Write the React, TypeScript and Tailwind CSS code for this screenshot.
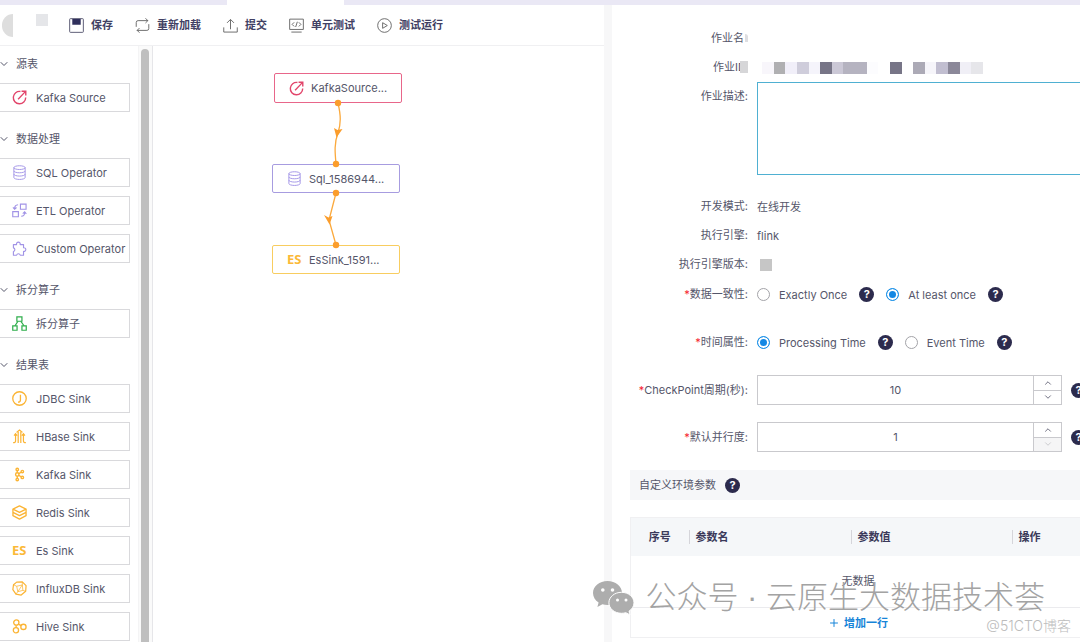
import type { ReactNode } from "react";
import { ChevronDown, ChevronUp, Plus } from "lucide-react";

type IconProps = { className?: string };

function SaveIcon() {
  return (
    <svg viewBox="0 0 16 16" className="h-[15px] w-[15px]" fill="none" stroke="#55556f">
      <rect x="0.7" y="0.7" width="14.6" height="14.6" rx="0.8" />
      <path d="M3.5 1h9v6.2h-9z" fill="#2f2f5c" stroke="none" />
    </svg>
  );
}

function ReloadIcon() {
  return (
    <svg viewBox="0 0 16 16" className="h-[15px] w-[15px]" fill="none" stroke="#666" strokeLinecap="round">
      <path d="M1.300 9V4.800a2 2 0 0 1 2-2H13.500M11.500.6l2.200 2.200L11.500 5" />
      <path d="M14.700 7v4.200a2 2 0 0 1-2 2H2.500M4.500 11l-2.200 2.200 2.200 2.200" />
    </svg>
  );
}

function SubmitIcon() {
  return (
    <svg viewBox="0 0 16 16" className="h-[15px] w-[15px]" fill="none" stroke="#666">
      <path d="M8 12V1.8M4.3 5.2L8 1.5l3.7 3.7M.8 10v5h14.4v-5" />
    </svg>
  );
}

function UnitTestIcon() {
  return (
    <svg viewBox="0 0 16 16" className="h-[15px] w-[15px]" fill="none" stroke="#666">
      <path d="M.7 1.2h14.6v11H.7zM2.5 15h11M5.5 4.6L3.3 6.8l2.2 2.2M10.5 4.6l2.2 2.2L10.5 9M8.9 4l-1.8 5.6" />
    </svg>
  );
}

function RunIcon() {
  return (
    <svg viewBox="0 0 16 16" className="h-[15px] w-[15px]" fill="none" stroke="#666" strokeLinejoin="round">
      <circle cx="8" cy="8" r="7.3" />
      <path d="M6 5l5 3-5 3z" />
    </svg>
  );
}

function SourceIcon({ className }: IconProps) {
  return (
    <svg viewBox="0 0 16 16" className={className} fill="none" stroke="#e2456b" strokeWidth="1.5">
      <path d="M9 1.6A6.6 6.6 0 1 0 14.6 8" />
      <path d="M6.5 9.8L14 2M10.2 1.4h4.5v4.5" />
    </svg>
  );
}

function SqlIcon({ className }: IconProps) {
  return (
    <svg viewBox="0 0 16 16" className={className} fill="none" stroke="#a193e6">
      <ellipse cx="8" cy="2.8" rx="6" ry="2" />
      <path d="M2 2.8v10.6c0 1.1 2.7 2 6 2s6-.9 6-2V2.8M2 6.3c0 1.1 2.7 2 6 2s6-.9 6-2M2 9.8c0 1.1 2.7 2 6 2s6-.9 6-2" />
    </svg>
  );
}

function EtlIcon({ className }: IconProps) {
  return (
    <svg viewBox="0 0 16 16" className={className} fill="none" stroke="#a193e6" strokeWidth="1.2">
      <path d="M9 1.2h6v5.4H9zM.8 9.2h6v5.4h-6z" />
      <path d="M6.5 1.8A4 4 0 0 0 2.8 6M1 4.6L2.8 6.6l2-1.8M9.8 14.2a4 4 0 0 0 3.7-4.2M11.5 11.4l2-1.9 1.8 2" />
    </svg>
  );
}

function CustomIcon({ className }: IconProps) {
  return (
    <svg viewBox="0 0 16 16" className={className} fill="none" stroke="#a193e6" strokeWidth="1.2" strokeLinejoin="round">
      <path d="M1.5 3.8h3.4a2 2 0 1 1 3.8 0h3.6v3.400a2 2 0 1 1 0 3.900v4.100H8.8a2 2 0 0 0-3.900 0H1.500v-4a2 2 0 0 0 0-3.900z" />
    </svg>
  );
}

function SplitIcon({ className }: IconProps) {
  return (
    <svg viewBox="0 0 16 16" className={className} fill="none" stroke="#2fae4c" strokeWidth="1.3">
      <path d="M5.2 1h5.4v4.6H5.2zM.8 10.6h4.6v4.6H.8zM10.6 10.6h4.6v4.6h-4.6z" />
      <path d="M6.3 5.8L3.2 10.4M9.5 5.8l3.3 4.6" />
    </svg>
  );
}

function JdbcIcon({ className }: IconProps) {
  return (
    <svg viewBox="0 0 16 16" className={className} fill="none" stroke="#fbb434" strokeWidth="1.4">
      <circle cx="8" cy="8" r="7.2" />
      <path d="M9 4v5.6c0 1.6-.8 2.3-2.6 2.3" />
    </svg>
  );
}

function HbaseIcon({ className }: IconProps) {
  return (
    <svg viewBox="0 0 16 16" className={className} fill="none" stroke="#fbb434" strokeWidth="1.3">
      <path d="M6.6 15V3M9.4 15V3M3.8 5.5v7.2c0 1.4-.8 1.9-2.6 1.9M12.2 5.5v7.2c0 1.4.8 1.9 2.6 1.9M4.8 3.6L8 1l3.2 2.6M2.2 7l1.6-2 1.6 2M10.6 7l1.6-2 1.6 2" />
    </svg>
  );
}

function KafkaIcon({ className }: IconProps) {
  return (
    <svg viewBox="0 0 16 16" className={className} fill="none" stroke="#fbb434" strokeWidth="1.5">
      <circle cx="5.6" cy="2.6" r="1.3" />
      <circle cx="5.6" cy="8" r="1.8" />
      <circle cx="5.6" cy="13.4" r="1.3" />
      <circle cx="11" cy="4.9" r="1.3" />
      <circle cx="11" cy="11.1" r="1.3" />
      <path d="M5.6 4v2.2M5.6 9.8V12M7.2 7.1l2.6-1.5M7.2 8.9l2.6 1.5" />
    </svg>
  );
}

function RedisIcon({ className }: IconProps) {
  return (
    <svg viewBox="0 0 16 16" className={className} fill="none" stroke="#fbb434" strokeWidth="1.4" strokeLinejoin="round">
      <path d="M8 1l7 3.4-7 3.4-7-3.4z" />
      <path d="M1 4.6v3.2l7 3.5 7-3.5V4.6M1 8v3.4L8 15l7-3.6V8" />
    </svg>
  );
}

function EsIcon() {
  return (
    <span className="w-[15px] font-['Open_Sans',sans-serif] text-[13px] leading-none font-bold text-[#fbb938]">ES</span>
  );
}

function InfluxIcon({ className }: IconProps) {
  return (
    <svg viewBox="0 0 16 16" className={className} fill="none" stroke="#fbb434" strokeLinejoin="round">
      <path d="M5 1.2l6-.2 4 4-.4 6-4.8 4-5.6-1L.9 9.2 1.6 4z" strokeWidth="1.3" />
      <path d="M5 5.6l6-1.4.6 5.8-5.4 1.4zM5 5.6L1.6 4M11 4.2L11 1M11.6 10l3 1M6.2 11.4L4.2 14M6.2 11.4L11 4.2" strokeWidth="0.8" />
    </svg>
  );
}

function HiveIcon({ className }: IconProps) {
  return (
    <svg viewBox="0 0 16 16" className={className} fill="none" stroke="#fbb434" strokeWidth="1.4">
      <circle cx="4.6" cy="3.8" r="2.8" />
      <circle cx="4.2" cy="12" r="2.8" />
      <circle cx="12.2" cy="8.4" r="2.8" />
      <path d="M4.4 6.6v2.6M6.8 5.4l3 1.6" />
    </svg>
  );
}

const toolbar = [
  { label: "保存", Icon: SaveIcon },
  { label: "重新加载", Icon: ReloadIcon },
  { label: "提交", Icon: SubmitIcon },
  { label: "单元测试", Icon: UnitTestIcon },
  { label: "测试运行", Icon: RunIcon },
];

const groups = [
  { title: "源表", items: [{ label: "Kafka Source", Icon: SourceIcon }] },
  {
    title: "数据处理",
    items: [
      { label: "SQL Operator", Icon: SqlIcon },
      { label: "ETL Operator", Icon: EtlIcon },
      { label: "Custom Operator", Icon: CustomIcon },
    ],
  },
  { title: "拆分算子", items: [{ label: "拆分算子", Icon: SplitIcon }] },
  {
    title: "结果表",
    items: [
      { label: "JDBC Sink", Icon: JdbcIcon },
      { label: "HBase Sink", Icon: HbaseIcon },
      { label: "Kafka Sink", Icon: KafkaIcon },
      { label: "Redis Sink", Icon: RedisIcon },
      { label: "Es Sink", Icon: EsIcon },
      { label: "InfluxDB Sink", Icon: InfluxIcon },
      { label: "Hive Sink", Icon: HiveIcon },
    ],
  },
];

// masked job id
const maskCells = [
  "bg-[#f8f6fb]", "bg-[#b0b0b2]", "bg-[#f1eff9]", "bg-[#cfcddb]", "bg-[#f5f4fb]",
  "bg-[#777587]", "bg-[#cbc8d6]", "bg-[#b5b3c0]", "bg-[#b5b3c0]", "bg-[#fcfcfe]",
  "bg-white", "bg-[#777587]", "bg-white", "bg-[#acaab6]", "bg-[#f6f5fa]",
  "bg-[#c1bed0]", "bg-[#8b8899]", "bg-[#f0eff6]", "bg-[#e6e6ea]",
];

function Help() {
  return (
    <button
      type="button"
      aria-label="help"
      className="flex h-[15px] w-[15px] shrink-0 items-center justify-center rounded-full bg-[#2c2b4d] text-[11px] leading-none font-bold text-white"
    >
      ?
    </button>
  );
}

function Label({ children, required, htmlFor }: { children: ReactNode; required?: boolean; htmlFor?: string }) {
  return (
    <label htmlFor={htmlFor} className="relative w-[118px] shrink-0 text-right leading-[29px] whitespace-nowrap">
      {required && <span className="text-[#f5222d]">*</span>}
      {children}
    </label>
  );
}

function Radio({ name, label, checked }: { name: string; label: string; checked?: boolean }) {
  return (
    <label className="flex items-center gap-[9px] whitespace-nowrap">
      <input
        type="radio"
        name={name}
        defaultChecked={checked}
        className="h-[13px] w-[13px] appearance-none rounded-full border border-[#a3a3a8] bg-white checked:border-[#1890e8] checked:bg-[#1488e4] checked:shadow-[inset_0_0_0_2px_white]"
      />
      {label}
    </label>
  );
}

function NumberField({ id, value, atMin }: { id: string; value: string; atMin?: boolean }) {
  return (
    <div className="flex h-[30px] w-[305px] border border-[#c9c9cd]">
      <input
        id={id}
        type="text"
        inputMode="numeric"
        defaultValue={value}
        className="min-w-0 flex-1 text-center outline-none"
      />
      <div className="flex w-7 flex-col border-l border-[#c9c9cd]">
        <button type="button" aria-label="increase" className="flex flex-1 items-center justify-center border-b border-[#c9c9cd]">
          <ChevronUp className="h-2.5 w-2.5" />
        </button>
        <button
          type="button"
          aria-label="decrease"
          disabled={atMin}
          className="flex flex-1 items-center justify-center disabled:bg-[#f5f5f6] disabled:text-[#c4c4c8]"
        >
          <ChevronDown className="h-2.5 w-2.5" />
        </button>
      </div>
    </div>
  );
}

function Sidebar() {
  return (
    <aside className="flex w-[153px] shrink-0 justify-between overflow-hidden border-r border-[#e6e6e9]">
      <div className="w-[130px] pt-2">
        {groups.map((group) => (
          <section key={group.title} className="mb-[17px]">
            <button type="button" className="-ml-0.5 mb-[9px] flex h-5 items-center gap-1.5">
              <ChevronDown className="h-3 w-3" />
              {group.title}
            </button>
            <ul className="flex flex-col gap-[9px]">
              {group.items.map(({ label, Icon }) => (
                <li
                  key={label}
                  className="flex h-[29px] items-center gap-[9px] border border-l-0 border-[#d9d9dc] pl-3 whitespace-nowrap"
                >
                  <Icon className="h-[15px] w-[15px] shrink-0" />
                  {label}
                </li>
              ))}
            </ul>
          </section>
        ))}
      </div>
      <div className="flex w-3.5 border-l border-[#f4f4f5] bg-[#fafafa] pt-[3px] pl-0.5">
        <div className="w-2 rounded-t-full bg-[#bfbfbf]" />
      </div>
    </aside>
  );
}

function Canvas() {
  return (
    <div className="relative min-w-0 flex-1 overflow-hidden">
      <div className="absolute top-[27px] left-[121px] flex h-[30px] w-32 items-center gap-[7px] rounded-xs border border-[#e8668a] pl-3.5 whitespace-nowrap">
        <SourceIcon className="h-[15px] w-[15px]" />
        KafkaSource...
      </div>
      <div className="absolute top-[118px] left-[119px] flex h-[29px] w-32 items-center gap-[7px] rounded-xs border border-[#a79ce0] pl-3.5 whitespace-nowrap">
        <SqlIcon className="h-[15px] w-[15px]" />
        Sql_1586944...
      </div>
      <div className="absolute top-[199px] left-[119px] flex h-[29px] w-32 items-center gap-[7px] rounded-xs border border-[#f8cd60] pl-3.5 whitespace-nowrap">
        <EsIcon />
        EsSink_1591...
      </div>
      <svg className="absolute top-0 left-0 h-60 w-64" viewBox="0 0 256 240" fill="none" stroke="#fba93c" strokeWidth="1.3">
        <path d="M185 57c3 13 3 20 0 30c-4 10-3 20-2 31" />
        <path d="M183 147l-7 27l7 25" />
        <g fill="#fb9d2c" stroke="none">
          <circle cx="185" cy="57" r="3.2" />
          <circle cx="183" cy="118" r="3.2" />
          <circle cx="183" cy="147" r="3.2" />
          <circle cx="183" cy="199" r="3.2" />
          <path d="M181 82l3.500 2 5-1-6 8.500z" />
          <path d="M171 169l4.500 2.500 4-1.500-3 8.500z" />
        </g>
      </svg>
    </div>
  );
}

function Settings() {
  return (
    <aside className="w-[468px] shrink-0 overflow-hidden pt-[19px] pl-[18px]">
      <form className="w-[456px]">
        <div className="flex h-[29px] gap-[9px]">
          <Label>
            作业名
            <span className="ml-px inline-block h-2 w-[3px] rounded-tr-full bg-[#dedee1]" />
          </Label>
        </div>
        <div className="flex h-[29px] items-center gap-3.5">
          <Label>
            作业ID
            <span className="absolute top-2 right-0 h-3 w-2 bg-[#d6d6d8]" />
            <span className="inline-block w-0.5" />
          </Label>
          <div className="flex h-3 w-[221px]">
            {maskCells.map((cell, i) => (
              <span key={i} className={`flex-1 ${cell}`} />
            ))}
          </div>
        </div>
        <div className="flex gap-[9px]">
          <Label htmlFor="desc">作业描述:</Label>
          <textarea id="desc" className="h-[93px] flex-1 resize-none border border-[#4fb0d2] p-2 outline-none" />
        </div>

        <div className="mt-[17px] flex h-[29px] items-center gap-[9px]">
          <Label>开发模式:</Label>
          <span>在线开发</span>
        </div>
        <div className="flex h-[29px] items-center gap-[9px]">
          <Label>执行引擎:</Label>
          <span>flink</span>
        </div>
        <div className="flex h-[29px] items-center gap-3">
          <Label>执行引擎版本:</Label>
          <span className="h-3 w-3 bg-[#c6c6c6]" />
        </div>
        <div className="flex h-[31px] items-center gap-[9px]">
          <Label required>数据一致性:</Label>
          <div className="flex items-center gap-3">
            <Radio name="consistency" label="Exactly Once" />
            <Help />
            <Radio name="consistency" label="At least once" checked />
            <Help />
          </div>
        </div>
        <div className="mt-[17px] flex h-[31px] items-center gap-[9px]">
          <Label required>时间属性:</Label>
          <div className="flex items-center gap-3">
            <Radio name="time" label="Processing Time" checked />
            <Help />
            <Radio name="time" label="Event Time" />
            <Help />
          </div>
        </div>
        <div className="mt-[17px] flex items-center gap-[9px]">
          <Label required htmlFor="checkpoint">CheckPoint周期(秒):</Label>
          <NumberField id="checkpoint" value="10" />
          <Help />
        </div>
        <div className="mt-[17px] flex items-center gap-[9px]">
          <Label required htmlFor="parallelism">默认并行度:</Label>
          <NumberField id="parallelism" value="1" atMin />
          <Help />
        </div>

        <div className="mt-[18px] flex h-[30px] items-center gap-[9px] bg-[#f6f7f9] pl-[9px]">
          自定义环境参数
          <Help />
        </div>

        <table className="mt-[17px] w-full table-fixed border-collapse border border-[#f0f0f2]">
          <thead className="bg-[#f5f7f9] text-left text-[#3b3a5a]">
            <tr className="h-[38px]">
              <th className="w-[58px] text-center font-bold">序号</th>
              <th className="w-[162px] font-bold">
                <div className="border-l border-[#d5d5da] pl-1.5 leading-[14px]">参数名</div>
              </th>
              <th className="w-[161px] font-bold">
                <div className="border-l border-[#d5d5da] pl-1.5 leading-[14px]">参数值</div>
              </th>
              <th className="font-bold">
                <div className="border-l border-[#d5d5da] pl-1.5 leading-[14px]">操作</div>
              </th>
            </tr>
          </thead>
          <tbody>
            <tr className="h-[52px] border-b border-[#ebebee]">
              <td colSpan={4} className="text-center">无数据</td>
            </tr>
            <tr className="h-[30px]">
              <td colSpan={4}>
                <button type="button" className="mx-auto flex items-center gap-1 font-bold text-[#1684d8]">
                  <Plus className="h-3 w-3" />
                  增加一行
                </button>
              </td>
            </tr>
          </tbody>
        </table>
      </form>
    </aside>
  );
}

function Watermark() {
  return (
    <div className="pointer-events-none absolute right-[9px] bottom-0">
      <div className="mr-[26px] flex items-center gap-2.5">
        <svg viewBox="0 0 42 34" className="h-[34px] w-[42px]" fill="#adadad">
          <path d="M14.500 0C6.500 0 0 5.400 0 12c0 3.900 2.200 7.300 5.600 9.500L4.400 26l5-2.700c1.600.5 3.400.7 5.100.7C22.500 24 29 18.600 29 12S22.500 0 14.500 0z" />
          <path
            d="M28.500 11.300c-7 0-12.600 4.700-12.600 10.500s5.600 10.500 12.600 10.500c1.500 0 3-.2 4.300-.6l4.300 2.200-1.100-3.700c3-1.900 5-5 5-8.400 0-5.800-5.600-10.500-12.500-10.500z"
            stroke="#fff"
          />
          <g fill="#fff">
            <circle cx="9.800" cy="9" r="1.800" />
            <circle cx="19.500" cy="9" r="1.800" />
            <circle cx="24.500" cy="19" r="1.500" />
            <circle cx="33" cy="19" r="1.500" />
          </g>
        </svg>
        <p className="font-['Liberation_Sans','Noto_Sans_CJK_SC',sans-serif] text-[31px] leading-9 font-light whitespace-nowrap text-[#a3a3a3]">
          公众号 · 云原生大数据技术荟
        </p>
      </div>
      <p className="pb-1.5 text-right text-sm leading-5 font-light text-[#bcbcbc]">@51CTO博客</p>
    </div>
  );
}

export default function App() {
  return (
    <div className="relative flex h-screen flex-col overflow-hidden bg-white font-[Inter,'Noto_Sans_CJK_SC',sans-serif] text-[11px] leading-4 text-[#55566a]">
      <div className="flex h-[5px] shrink-0 bg-[#eae8f5]">
        <div className="ml-[227px] w-[117px] bg-white" />
      </div>
      <div className="flex min-h-0 flex-1">
        <main className="flex min-w-0 flex-1 flex-col">
          <header className="flex h-[41px] shrink-0 items-center border-b border-[#f0f0f2] pl-0.5">
            <span className="h-[23px] w-[11px] rounded-l-full bg-[#dedede]" />
            <span className="mt-[9px] mr-[21px] ml-[23px] h-3 w-3 self-start bg-[#e5e6e9]" />
            <nav className="flex gap-[22px]">
              {toolbar.map(({ label, Icon }) => (
                <button key={label} type="button" className="flex items-center gap-[7px] font-bold whitespace-nowrap text-[#414063]">
                  <Icon />
                  {label}
                </button>
              ))}
            </nav>
          </header>
          <div className="flex min-h-0 flex-1">
            <Sidebar />
            <Canvas />
          </div>
        </main>
        <div className="w-2 shrink-0 bg-[#f7f7f8]" />
        <Settings />
      </div>
      <Watermark />
    </div>
  );
}
